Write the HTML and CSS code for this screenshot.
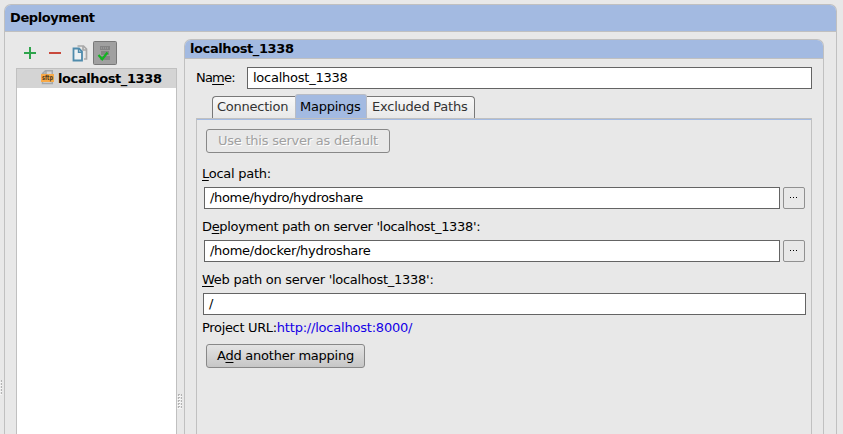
FILE: index.html
```html
<!DOCTYPE html>
<html lang="en">
<head>
<meta charset="utf-8">
<title>Deployment</title>
<link rel="stylesheet" href="styles.css">
</head>
<body>
<div class="edge"><i class="grip grip-edge"></i></div>
<section class="panel outer">
  <h1 class="title">Deployment</h1>
  <div class="content">
    <aside class="servers">
      <div class="toolbar">
        <svg class="tool" viewBox="0 0 24 24"><path d="M12 6v12M6 12h12" stroke="#2ea44c" stroke-width="2"/></svg>
        <svg class="tool" viewBox="0 0 24 24"><path d="M6 12h12" stroke="#c9493c" stroke-width="2"/></svg>
        <svg class="tool" viewBox="0 0 24 24"><path d="M9.500 5h6l3 3v10H16M15 5.500V9h3.500" fill="none" stroke="#a8a8a8" stroke-width="1.700"/><path d="M5.500 7.500h5.500l3 3V19.500H5.500z" fill="#eef1f3" stroke="#4f8bac" stroke-width="1.800"/><path d="M10.500 8v3.300H14" fill="none" stroke="#4f8bac" stroke-width="1.400"/></svg>
        <svg class="tool" viewBox="0 0 24 24"><rect x=".5" y=".5" width="23" height="23" rx="1" fill="#a0a0a0" stroke="#787878"/><path d="M7 5h10v4H7zM8 10h8v4H8zM7 15h10v4H7z" fill="#848484"/><path d="M8 7h1m1 0h1m1 0h1m1 0h1" stroke="#aaa"/><path d="M5.500 14l3.700 4.300L14.500 11.500" fill="none" stroke="#12b422" stroke-width="2.200"/></svg>
      </div>
      <div class="list">
        <div class="row">
          <svg class="sftp" viewBox="0 0 14 15"><path d="M1.500 4V3.500L4.500.700h6.800V4M1.500 12v1.500h9.800V12M5 1v3H1.500" fill="none" stroke="#a5a8aa" stroke-width="1.500"/><rect x="0" y="4" width="13" height="8" fill="#f8aa48"/><text x="1" y="10" textLength="11" lengthAdjust="spacingAndGlyphs">sftp</text></svg>
          <b>localhost_1338</b>
        </div>
      </div>
    </aside>
    <div class="splitter"><i class="grip"></i></div>
    <section class="panel server">
      <h2 class="title small">localhost_1338</h2>
      <div class="name-row"><label>Na<u>m</u>e:</label><div class="field">localhost_1338</div></div>
      <nav class="tabs">
        <span class="tab first">Connection</span><span class="tab active">Mappings</span><span class="tab last">Excluded Paths</span>
      </nav>
      <div class="page">
        <div class="button disabled">Use this server as default</div>
        <label class="caption"><u>L</u>ocal path:</label>
        <div class="path"><div class="field local">/home/hydro/hydroshare</div><div class="browse"><i></i><i></i><i></i></div></div>
        <label class="caption deploy">D<u>e</u>ployment path on server 'localhost_1338':</label>
        <div class="path"><div class="field remote">/home/docker/hydroshare</div><div class="browse"><i></i><i></i><i></i></div></div>
        <label class="caption"><u>W</u>eb path on server 'localhost_1338':</label>
        <div class="field web">/</div>
        <div class="url">Project URL:<a>http://localhost:8000/</a></div>
        <div class="button add">A<u>d</u>d another mapping</div>
      </div>
    </section>
  </div>
</section>
</body>
</html>
```
FILE: styles.css
```css
* { box-sizing: border-box; }
body {
  margin: 0;
  width: 843px;
  height: 434px;
  overflow: hidden;
  display: flex;
  background: #e8e8e8;
  color: #000;
  font: 13px/16px "DejaVu Sans", sans-serif;
  letter-spacing: -0.24px;
}
u { text-decoration-thickness: 1px; text-underline-offset: 2px; text-decoration-skip-ink: none; }
.edge { width: 4px; padding-top: 380px; }
.grip {
  display: block;
  width: 5px;
  height: 15px;
  background: conic-gradient(#b4b4b4 25%, #f6f6f6 0 75%, #e8e8e8 0) 0 0 / 3px 3px;
}
.grip-edge { width: 2px; }
.panel { border: 1px solid #c0c0c0; border-bottom: 0; border-radius: 7px 7px 0 0; }
.outer { width: 833px; height: 430px; margin-top: 4px; }
.title {
  margin: 0;
  height: 27px;
  padding: 0 5px;
  font-size: 13px;
  line-height: 26px;
  letter-spacing: -0.4px;
  background: #a3bae1;
  border-bottom: 1px solid #c0c0c0;
  border-radius: 6px 6px 0 0;
}
.title.small { height: 19px; line-height: 17px; }
.content { display: flex; padding-left: 11px; }
.servers { width: 161px; }
.toolbar { display: flex; gap: 1px; height: 36px; padding: 9px 0 0 2px; }
.tool { width: 24px; height: 24px; }
.list { height: 366px; background: #fff; border: 1px solid #c0c0c0; border-bottom: 0; }
.row {
  display: flex;
  height: 19px;
  padding-left: 24px;
  background: #d4d4d4;
  line-height: 19px;
  letter-spacing: -0.4px;
}
.sftp { flex: none; width: 14px; height: 15px; margin: 1px 3px 0 0; overflow: visible; }
.sftp text { font: bold 7px "DejaVu Sans", sans-serif; letter-spacing: 0; fill: #4b3820; }
.splitter { width: 7px; padding-top: 362px; }
.server { width: 640px; height: 395px; margin-top: 7px; }
.name-row { display: flex; align-items: center; margin: 8px 11px 0; height: 22px; }
.name-row label { width: 51px; letter-spacing: -0.8px; }
.field {
  flex: 1;
  height: 22px;
  padding: 0 5px;
  line-height: 20px;
  background: #fff;
  border: 1px solid #646464;
}
.local { letter-spacing: -0.34px; }
.remote { letter-spacing: -0.28px; }
.tabs { display: flex; align-items: flex-end; height: 29px; padding-left: 27px; }
.tab {
  height: 22px;
  padding-left: 5px;
  line-height: 19px;
  color: #333;
  white-space: nowrap;
  background: linear-gradient(#f8f8f8, #e8e8e8);
  border-top: 1px solid #787878;
}
.first { width: 83px; padding-left: 4px; border-left: 1px solid #787878; border-radius: 4px 0 0; }
.active { width: 72px; height: 24px; line-height: 23px; color: #000; background: #a3bae1; border: 1px solid #b8bcc5; border-bottom: 0; border-radius: 3px 3px 0 0; padding-left: 4px; }
.last { width: 108px; letter-spacing: -0.22px; border-right: 1px solid #787878; border-radius: 0 4px 0 0; }
.page {
  width: 616px;
  height: 320px;
  margin-left: 11px;
  padding: 9px 5px 0;
  border: 1px solid #c0c0c0;
  border-bottom: 0;
  box-shadow: inset 0 1px #a3bae1;
}
.button {
  width: 184px;
  height: 24px;
  margin-left: 4px;
  text-align: center;
  line-height: 22px;
  border: 1px solid #888;
  border-radius: 3px;
}
.disabled { margin-top: 1px; color: #a0a0a0; text-shadow: 1px 1px #fff; }
.caption { display: block; height: 16px; margin: 16px 0 5px; letter-spacing: -0.27px; }
.deploy { letter-spacing: -0.33px; }
.disabled + .caption { margin-top: 13px; }
.path { display: flex; gap: 3px; padding: 0 1px 0 2px; }
.path + .caption { margin: 10px 0 5px; }
.browse {
  display: flex;
  gap: 2px;
  width: 22px;
  height: 22px;
  padding: 9px 0 0 6px;
  border: 1px solid #909090;
  border-radius: 2px;
}
.browse i { width: 1px; height: 1px; background: #000; }
.web { margin-left: 1px; width: 603px; }
.url { margin-top: 5px; height: 16px; letter-spacing: -0.33px; }
.url a { color: #1400e6; letter-spacing: -0.21px; }
.add { width: 159px; margin-top: 8px; background: linear-gradient(#e4e4e4, #c6c6c6); }
```
